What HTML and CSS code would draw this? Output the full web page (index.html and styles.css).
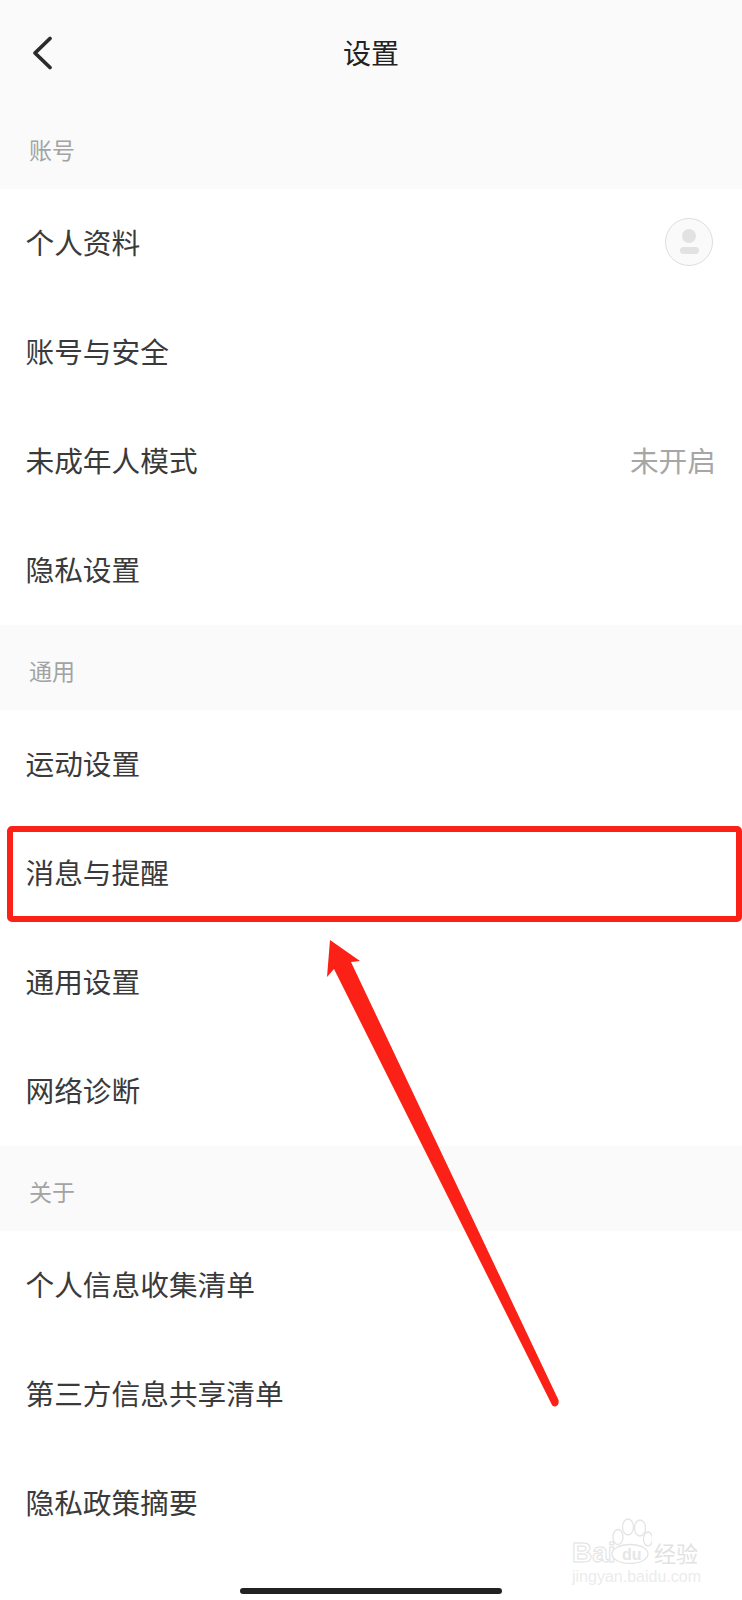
FILE: index.html
```html
<!DOCTYPE html>
<html lang="zh-CN">
<head>
    <meta charset="UTF-8">
    <meta name="viewport" content="width=device-width, initial-scale=1.0">
    <title>设置</title>
    <link rel="stylesheet" href="styles.css">
</head>
<body>
    <div class="page">
        <div class="header">
            <svg class="back" width="24" height="36" viewBox="0 0 24 36">
                <path d="M20 3.5 L5 18 L20 32.5" fill="none" stroke="#2b2b2b" stroke-width="3.8" stroke-linecap="round" stroke-linejoin="round"/>
            </svg>
            <div class="title">设置</div>
        </div>

        <div class="section first">账号</div>
        <div class="row">
            <span>个人资料</span>
            <div class="avatar">
                <div class="avatar-head"></div>
                <div class="avatar-body"></div>
            </div>
        </div>
        <div class="row">账号与安全</div>
        <div class="row">
            <span>未成年人模式</span>
            <span class="value">未开启</span>
        </div>
        <div class="row">隐私设置</div>

        <div class="section">通用</div>
        <div class="row">运动设置</div>
        <div class="row">消息与提醒</div>
        <div class="row">通用设置</div>
        <div class="row">网络诊断</div>

        <div class="section">关于</div>
        <div class="row">个人信息收集清单</div>
        <div class="row">第三方信息共享清单</div>
        <div class="row">隐私政策摘要</div>

        <div class="home-bar"></div>

        <!-- annotation drawn over the screenshot -->
        <div class="highlight"></div>
        <svg class="arrow" width="742" height="1600" viewBox="0 0 742 1600">
            <path d="M330 940 L360 961 L351 962 L558.5 1400 Q559.5 1405 555.5 1406.5 Q552.5 1407 551 1403 L334 969 L327 977 Z" fill="#fb2117"/>
        </svg>

        <div class="watermark">
            <span class="wm-logo">Bai</span>
            <svg class="wm-paw" width="42" height="46" viewBox="0 0 42 46">
                <g fill="#fff" stroke="#e4e4e4" stroke-width="1.3">
                    <ellipse cx="8" cy="19" rx="5" ry="7.5"/>
                    <ellipse cx="18" cy="9" rx="5.5" ry="8"/>
                    <ellipse cx="30" cy="10" rx="5.5" ry="8"/>
                    <ellipse cx="38" cy="21" rx="4.5" ry="7"/>
                    <ellipse cx="20" cy="36" rx="18" ry="9.5"/>
                </g>
            </svg>
            <span class="wm-du">du</span>
            <span class="wm-cn">经验</span>
            <div class="wm-url">jingyan.baidu.com</div>
        </div>
    </div>
</body>
</html>
```

FILE: styles.css
```css
* {
    box-sizing: border-box;
}
body {
    margin: 0;
    background-color: #fff;
    font-family: "Noto Sans CJK SC", "Noto Sans", sans-serif;
}
.page {
    position: relative;
    width: 742px;
    height: 1600px;
    overflow: hidden;
    background-color: #fff;
}
.header {
    position: relative;
    height: 104px;
    display: flex;
    align-items: center;
    justify-content: center;
    background-color: #fafafa;
}
.back {
    position: absolute;
    left: 30px;
    top: 35px;
}
.title {
    font-size: 28px;
    color: #222;
}
.section {
    height: 85px;
    padding: 29px 0 0 29px;
    font-size: 23px;
    line-height: 32px;
    color: #a3a3a3;
    background-color: #fafafa;
}
.row {
    height: 109px;
    padding: 0 26px 4px 25.5px;
    display: flex;
    align-items: center;
    justify-content: space-between;
    font-size: 28.7px;
    color: #3a3a3a;
}
.value {
    color: #a6a6a6;
}
.avatar {
    width: 48px;
    height: 48px;
    margin-right: 3px;
    display: flex;
    flex-direction: column;
    align-items: center;
    justify-content: center;
    gap: 4px;
    border: 1px solid #dedede;
    border-radius: 50%;
    background-color: #fafafa;
}
.avatar-head {
    width: 14px;
    height: 14px;
    border-radius: 50%;
    background-color: #e2e2e2;
}
.avatar-body {
    width: 19px;
    height: 7px;
    border-radius: 4px;
    background-color: #e2e2e2;
}
.home-bar {
    position: absolute;
    left: 240px;
    bottom: 6px;
    width: 262px;
    height: 6px;
    border-radius: 3px;
    background-color: #222;
}
.highlight {
    position: absolute;
    left: 7px;
    top: 826px;
    width: 735px;
    height: 96px;
    border: 6px solid #fb2117;
    border-radius: 5px;
}
.arrow {
    position: absolute;
    left: 0;
    top: 0;
}
.watermark {
    position: absolute;
    left: 570px;
    top: 1518px;
    width: 136px;
    height: 70px;
    font-family: "Liberation Sans", sans-serif;
}
.wm-logo {
    position: absolute;
    left: 2px;
    top: 21px;
    font-size: 28px;
    line-height: 28px;
    font-weight: bold;
    color: #fff;
    -webkit-text-stroke: 1px #e2e2e2;
}
.wm-paw {
    position: absolute;
    left: 40px;
    top: 0;
}
.wm-du {
    position: absolute;
    left: 52px;
    top: 28px;
    font-size: 16px;
    line-height: 18px;
    font-weight: bold;
    color: #e6e6e6;
}
.wm-cn {
    position: absolute;
    left: 84px;
    top: 21px;
    font-family: "Noto Sans CJK SC", sans-serif;
    font-size: 22px;
    line-height: 26px;
    color: #e2e2e2;
}
.wm-url {
    position: absolute;
    left: 2px;
    top: 50px;
    font-size: 16px;
    line-height: 18px;
    color: #ececec;
    white-space: nowrap;
}
```
